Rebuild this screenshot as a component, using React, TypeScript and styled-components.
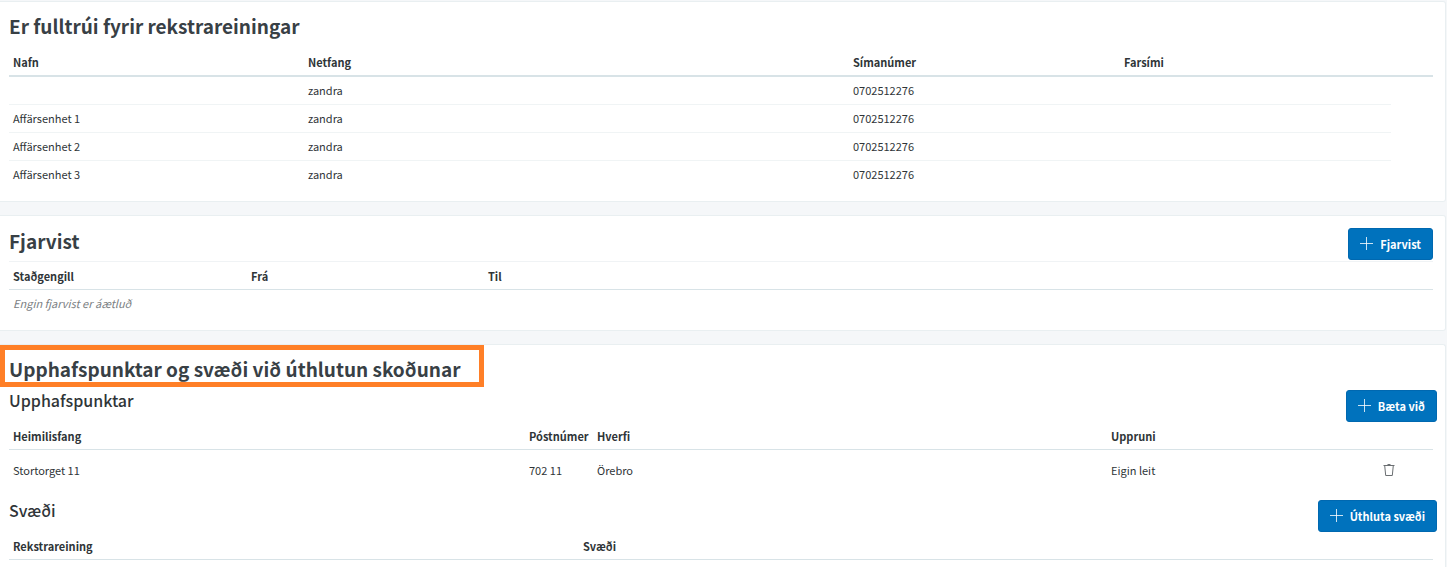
import React from "react";
import styled, { createGlobalStyle, css } from "styled-components";

const GlobalStyle = createGlobalStyle`
  *, *::before, *::after { box-sizing: border-box; }
  body {
    margin: 0;
    background: #f5f7f9;
    color: #2f3538;
    font-family: "Noto Sans CJK SC", "Noto Sans", sans-serif;
    font-size: 11px;
    line-height: 20px;
  }
`;

const Page = styled.main`
  display: flex;
  flex-direction: column;
  gap: 13px;
  min-height: 100vh;
  padding: 1px 1px 0 0;
`;

const Card = styled.section<{ $last?: boolean }>`
  padding: 0 12px 12px 9px;
  background: #fff;
  border: 1px solid #e9eff1;
  border-left: 0;
  border-radius: 0 3px 3px 0;
  ${({ $last }) =>
    $last &&
    css`
      flex: 1;
      padding-bottom: 0;
      border-bottom: 0;
      border-bottom-right-radius: 0;
    `}
`;

const CardHeader = styled.header<{ $ruled?: boolean }>`
  display: flex;
  align-items: flex-start;
  justify-content: space-between;
  padding-top: ${({ $ruled }) => ($ruled ? 12 : 11)}px;
  padding-bottom: ${({ $ruled }) => ($ruled ? 1 : 10)}px;
  border-bottom: ${({ $ruled }) => ($ruled ? "1px solid #f0f3f5" : "0")};
`;

const Title = styled.h2`
  margin: 0;
  color: #384045;
  font-size: 19px;
  font-weight: 700;
  line-height: 26px;
`;

const HighlightedTitle = styled(Title)`
  width: fit-content;
  margin-left: -9px;
  padding: 6px 18px 0 4px;
  border: 5px solid #ff7f27;
`;

const SubHeader = styled.header<{ $gap: number }>`
  display: flex;
  align-items: flex-start;
  justify-content: space-between;
  margin-right: -4px;
  padding-top: ${({ $gap }) => $gap}px;
`;

const SubTitle = styled.h3`
  margin: 0;
  font-size: 16px;
  font-weight: 500;
  line-height: 20px;
`;

const Button = styled.button`
  display: inline-flex;
  align-items: center;
  gap: 7px;
  height: 32px;
  padding: 0 11px;
  border: 1px solid #0068b0;
  border-radius: 3px;
  background: #0072bd;
  color: #fff;
  font-family: inherit;
  font-size: 11px;
  font-weight: 700;
  line-height: 20px;
  cursor: pointer;

  svg {
    margin-bottom: 2px;
  }
`;

const IconButton = styled.button`
  display: block;
  margin: 0 auto;
  padding: 0;
  border: 0;
  background: none;
  color: #6b6f72;
  line-height: 0;
  cursor: pointer;
`;

const Table = styled.table`
  width: 100%;
  border-collapse: separate;
  border-spacing: 0;
  table-layout: fixed;
`;

const Col = styled.col<{ $share: number }>`
  width: ${({ $share }) => $share}%;
`;

const HeadCell = styled.th<{ $rule: number }>`
  height: 28px;
  padding: 0 4px;
  border-bottom: ${({ $rule }) => $rule}px solid #d8e3e7;
  font-weight: 700;
  text-align: left;
  white-space: nowrap;
`;

const Cell = styled.td<{ $height: number; $ruled?: boolean }>`
  height: ${({ $height }) => $height}px;
  padding: 0 4px 2px;
  border-bottom: ${({ $ruled }) => ($ruled ? "1px solid #f0f4f5" : "0")};
`;

const EmptyNote = styled.em`
  color: #7b8083;
`;

const PlusIcon = () => (
  <svg width="13" height="13" viewBox="0 0 13 13" fill="none" stroke="currentColor" strokeOpacity="0.8" aria-hidden="true">
    <path d="M6.5 0v13M0 6.5h13" />
  </svg>
);

const TrashIcon = () => (
  <svg width="12" height="14" viewBox="0 0 12 14" fill="none" stroke="currentColor" aria-hidden="true">
    <path d="M0.5 2.5h11M4.5 1.5h3M1.7 2.5l1 10h6.6l1-10" />
  </svg>
);

const Columns = ({ weights }: { weights: number[] }) => {
  const total = weights.reduce((sum, weight) => sum + weight, 0);
  return (
    <colgroup>
      {weights.map((weight, i) => (
        <Col key={i} $share={(weight / total) * 100} />
      ))}
    </colgroup>
  );
};

const TableHead = ({ labels, rule = 1, spare }: { labels: string[]; rule?: number; spare?: boolean }) => (
  <thead>
    <tr>
      {labels.map((label) => (
        <HeadCell key={label} $rule={rule} scope="col">
          {label}
        </HeadCell>
      ))}
      {spare && <HeadCell as="td" $rule={rule} />}
    </tr>
  </thead>
);

const units = [
  { name: "", email: "zandra", phone: "0702512276" },
  { name: "Affärsenhet 1", email: "zandra", phone: "0702512276" },
  { name: "Affärsenhet 2", email: "zandra", phone: "0702512276" },
  { name: "Affärsenhet 3", email: "zandra", phone: "0702512276" },
];

export default function App() {
  return (
    <>
      <GlobalStyle />
      <Page>
        <Card>
          <CardHeader>
            <Title>Er fulltrúi fyrir rekstrareiningar</Title>
          </CardHeader>
          <Table>
            <Columns weights={[295, 545, 271, 271, 42]} />
            <TableHead labels={["Nafn", "Netfang", "Símanúmer", "Farsími"]} rule={2} spare />
            <tbody>
              {units.map((unit, i) => {
                const ruled = i < units.length - 1;
                return (
                  <tr key={i}>
                    <Cell $height={28} $ruled={ruled}>{unit.name}</Cell>
                    <Cell $height={28} $ruled={ruled}>{unit.email}</Cell>
                    <Cell $height={28} $ruled={ruled}>{unit.phone}</Cell>
                    <Cell $height={28} $ruled={ruled} />
                    <Cell $height={28} />
                  </tr>
                );
              })}
            </tbody>
          </Table>
        </Card>

        <Card>
          <CardHeader $ruled>
            <Title>Fjarvist</Title>
            <Button type="button">
              <PlusIcon />
              Fjarvist
            </Button>
          </CardHeader>
          <Table>
            <Columns weights={[238, 237, 949]} />
            <TableHead labels={["Staðgengill", "Frá", "Til"]} />
            <tbody>
              <tr>
                <Cell $height={28} colSpan={3}>
                  <EmptyNote>Engin fjarvist er áætluð</EmptyNote>
                </Cell>
              </tr>
            </tbody>
          </Table>
        </Card>

        <Card $last>
          <HighlightedTitle>Upphafspunktar og svæði við úthlutun skoðunar</HighlightedTitle>
          <SubHeader $gap={3}>
            <SubTitle>Upphafspunktar</SubTitle>
            <Button type="button">
              <PlusIcon />
              Bæta við
            </Button>
          </SubHeader>
          <Table>
            <Columns weights={[516, 68, 514, 238, 88]} />
            <TableHead labels={["Heimilisfang", "Póstnúmer", "Hverfi", "Uppruni"]} spare />
            <tbody>
              <tr>
                <Cell $height={42}>Stortorget 11</Cell>
                <Cell $height={42}>702 11</Cell>
                <Cell $height={42}>Örebro</Cell>
                <Cell $height={42}>Eigin leit</Cell>
                <Cell $height={42}>
                  <IconButton type="button" aria-label="Eyða">
                    <TrashIcon />
                  </IconButton>
                </Cell>
              </tr>
            </tbody>
          </Table>
          <SubHeader $gap={8}>
            <SubTitle>Svæði</SubTitle>
            <Button type="button">
              <PlusIcon />
              Úthluta svæði
            </Button>
          </SubHeader>
          <Table>
            <Columns weights={[570, 854]} />
            <TableHead labels={["Rekstrareining", "Svæði"]} />
          </Table>
        </Card>
      </Page>
    </>
  );
}
